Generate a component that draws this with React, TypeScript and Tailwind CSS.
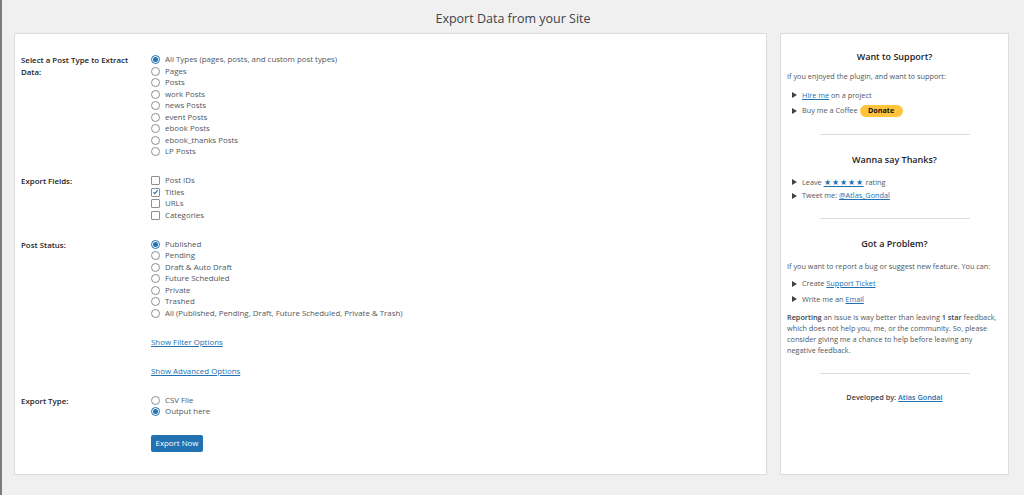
import React from "react";

const font = { fontFamily: '"Open Sans", "Noto Sans", Arial, sans-serif' };

function Radio({ checked }: { checked?: boolean }) {
  return (
    <span
      className={`inline-flex h-[9px] w-[9px] shrink-0 items-center justify-center rounded-full border bg-white ${
        checked ? "border-[#2271b1]" : "border-[#8c8f94]"
      }`}
    >
      {checked && <span className="h-[5px] w-[5px] rounded-full bg-[#2271b1]" />}
    </span>
  );
}

function Check({ checked }: { checked?: boolean }) {
  return (
    <span className="inline-flex h-[9px] w-[9px] shrink-0 items-center justify-center rounded-[1px] border border-[#8c8f94] bg-white">
      {checked && (
        <svg viewBox="0 0 10 10" className="h-[8px] w-[8px]">
          <path d="M2 5.2 L4.2 7.4 L8.2 2.4" fill="none" stroke="#2271b1" strokeWidth="1.6" />
        </svg>
      )}
    </span>
  );
}

function Option({ label, checked, box }: { label: string; checked?: boolean; box?: boolean }) {
  return (
    <div className="flex h-[11.5px] items-center gap-[5px]">
      {box ? <Check checked={checked} /> : <Radio checked={checked} />}
      <span>{label}</span>
    </div>
  );
}

function Row({ label, children }: { label?: React.ReactNode; children: React.ReactNode }) {
  return (
    <div className="flex">
      <div className="w-[130px] shrink-0 pt-[1px] font-semibold text-[#1d2327]">{label}</div>
      <div>{children}</div>
    </div>
  );
}

function Bullet({ children }: { children: React.ReactNode }) {
  return (
    <li className="flex items-center gap-[5px]">
      <svg viewBox="0 0 5 6" className="h-[6px] w-[5px] shrink-0">
        <path d="M0 0 L5 3 L0 6 Z" fill="#3c434a" />
      </svg>
      <span>{children}</span>
    </li>
  );
}

function Divider() {
  return <div className="mx-auto h-px w-[150px] bg-[#dcdcde]" />;
}

const link = "text-[#2271b1] underline";

export default function App() {
  const postTypes = [
    "All Types (pages, posts, and custom post types)",
    "Pages",
    "Posts",
    "work Posts",
    "news Posts",
    "event Posts",
    "ebook Posts",
    "ebook_thanks Posts",
    "LP Posts",
  ];
  const statuses = [
    "Published",
    "Pending",
    "Draft & Auto Draft",
    "Future Scheduled",
    "Private",
    "Trashed",
    "All (Published, Pending, Draft, Future Scheduled, Private & Trash)",
  ];

  return (
    <div style={font} className="flex h-[495px] w-full overflow-hidden bg-[#f0f0f1] text-[7.9px] leading-[11.5px] text-[#50575e]">
      {/* admin menu edge */}
      <div className="w-[2px] shrink-0 bg-[#7c7c7c]" />

      <div className="flex-1">
        <h1 className="pt-[10px] pb-[5px] text-center text-[12.5px] leading-[18px] text-[#3c434a]">Export Data from your Site</h1>

        <div className="flex gap-[13px] pl-[12px]">
          {/* Main form */}
          <div className="flex h-[442px] w-[753px] flex-col gap-[17.5px] border border-[#dcdcde] bg-white pl-[6px] pt-[20px]">
            <Row label={<>Select a Post Type to Extract<br />Data:</>}>
              {postTypes.map((t, i) => (
                <Option key={t} label={t} checked={i === 0} />
              ))}
            </Row>
            <Row label="Export Fields:">
              {["Post IDs", "Titles", "URLs", "Categories"].map((t) => (
                <Option key={t} label={t} box checked={t === "Titles"} />
              ))}
            </Row>
            <Row label="Post Status:">
              {statuses.map((t, i) => (
                <Option key={t} label={t} checked={i === 0} />
              ))}
            </Row>
            <Row>
              <a className={link}>Show Filter Options</a>
            </Row>
            <Row>
              <a className={link}>Show Advanced Options</a>
            </Row>
            <Row label="Export Type:">
              <Option label="CSV File" />
              <Option label="Output here" checked />
            </Row>
            <Row>
              <button className="h-[17px] w-[52px] rounded-[2px] bg-[#2271b1] text-[7.9px] text-white">Export Now</button>
            </Row>
          </div>

          {/* Sidebar */}
          <div className="h-[442px] w-[229px] border border-[#dcdcde] bg-white px-[6px] pt-[17px] text-[7.3px]">
            <h3 className="text-center text-[9px] font-semibold leading-[12px] text-[#1d2327]">Want to Support?</h3>
            <p className="mt-[8px]">If you enjoyed the plugin, and want to support:</p>
            <ul className="mt-[7px] flex flex-col gap-[3.5px] pl-[5px]">
              <Bullet>
                <a className={link}>Hire me</a> on a project
              </Bullet>
              <Bullet>
                <span className="inline-flex items-center gap-[2px]">
                  Buy me a Coffee
                  <span className="inline-flex h-[12px] w-[43px] items-center justify-center rounded-full bg-[#ffc439] text-[7.2px] font-bold text-[#111]">Donate</span>
                </span>
              </Bullet>
            </ul>
            <div className="mt-[17px]"><Divider /></div>
            <h3 className="mt-[19px] text-center text-[9px] font-semibold leading-[12px] text-[#1d2327]">Wanna say Thanks?</h3>
            <ul className="mt-[10px] flex flex-col gap-[2px] pl-[5px]">
              <Bullet>
                Leave <a className={`${link} text-[8px] tracking-[1px]`}>★★★★★</a> rating
              </Bullet>
              <Bullet>
                Tweet me: <a className={link}>@Atlas_Gondal</a>
              </Bullet>
            </ul>
            <div className="mt-[16px]"><Divider /></div>
            <h3 className="mt-[19px] text-center text-[9px] font-semibold leading-[12px] text-[#1d2327]">Got a Problem?</h3>
            <p className="mt-[11px] whitespace-nowrap">If you want to report a bug or suggest new feature. You can:</p>
            <ul className="mt-[6px] flex flex-col gap-[4px] pl-[5px]">
              <Bullet>
                Create <a className={link}>Support Ticket</a>
              </Bullet>
              <Bullet>
                Write me an <a className={link}>Email</a>
              </Bullet>
            </ul>
            <p className="mt-[7px] whitespace-nowrap leading-[11px]">
              <b className="font-semibold text-[#3c434a]">Reporting</b> an issue is way better than leaving <b className="font-semibold text-[#3c434a]">1 star</b> feedback,
              <br />which does not help you, me, or the community. So, please
              <br />consider giving me a chance to help before leaving any
              <br />negative feedback.
            </p>
            <div className="mt-[17px]"><Divider /></div>
            <p className="mt-[18px] text-center font-semibold text-[#3c434a]">
              Developed by: <a className={link}>Atlas Gondal</a>
            </p>
          </div>
        </div>
      </div>
    </div>
  );
}
